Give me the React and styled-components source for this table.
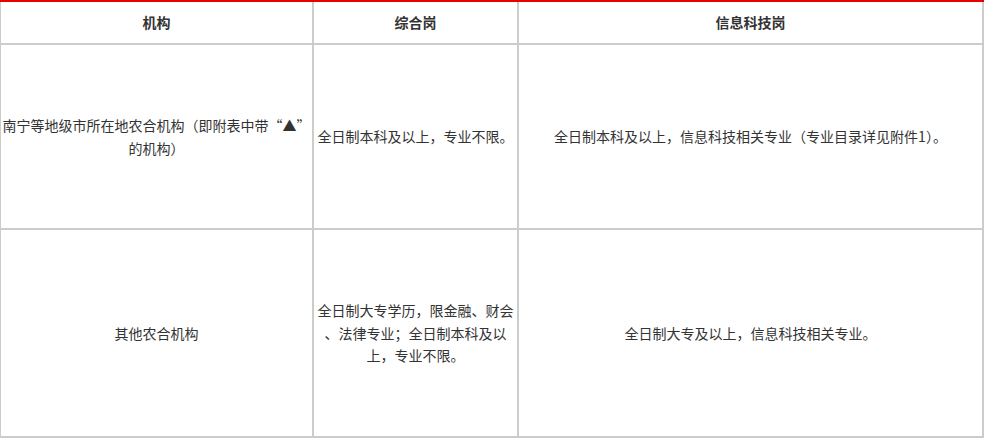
import React from "react";
import styled, { createGlobalStyle } from "styled-components";

const GlobalStyle = createGlobalStyle`
  html, body {
    margin: 0;
    padding: 0;
    background: #fff;
  }
  body {
    font-family: "Noto Sans CJK SC", "Noto Sans", sans-serif;
    color: #333;
  }
`;

const Table = styled.div`
  width: 984px;
  box-sizing: border-box;
  display: grid;
  grid-template-columns: 311px 203px 463px;
  grid-template-rows: 41px 183px 206px;
  gap: 2px;
  padding: 0 2px 2px 1px;
  background: #ccc;
  border-top: 2px solid #e60000;
`;

const Cell = styled.div`
  background: #fff;
  display: flex;
  flex-direction: column;
  align-items: center;
  justify-content: center;
  text-align: center;
  padding: 0 3px;
  font-size: 14px;
  line-height: 22.5px;
  font-weight: ${(p) => (p.$head ? 700 : 400)};
  color: #333;
  white-space: nowrap;
`;

const Line = styled.span`
  display: block;
`;

const head = ["机构", "综合岗", "信息科技岗"];

const rows = [
  [
    ["南宁等地级市所在地农合机构（即附表中带“▲”", "的机构）"],
    ["全日制本科及以上，专业不限。"],
    ["全日制本科及以上，信息科技相关专业（专业目录详见附件1）。"],
  ],
  [
    ["其他农合机构"],
    ["全日制大专学历，限金融、财会", "、法律专业；全日制本科及以", "上，专业不限。"],
    ["全日制大专及以上，信息科技相关专业。"],
  ],
];

export default function App() {
  return (
    <>
      <GlobalStyle />
      <Table>
        {head.map((h) => (
          <Cell key={h} $head>
            {h}
          </Cell>
        ))}
        {rows.map((row, i) =>
          row.map((lines, j) => (
            <Cell key={`${i}-${j}`}>
              {lines.map((l) => (
                <Line key={l}>{l}</Line>
              ))}
            </Cell>
          ))
        )}
      </Table>
    </>
  );
}
